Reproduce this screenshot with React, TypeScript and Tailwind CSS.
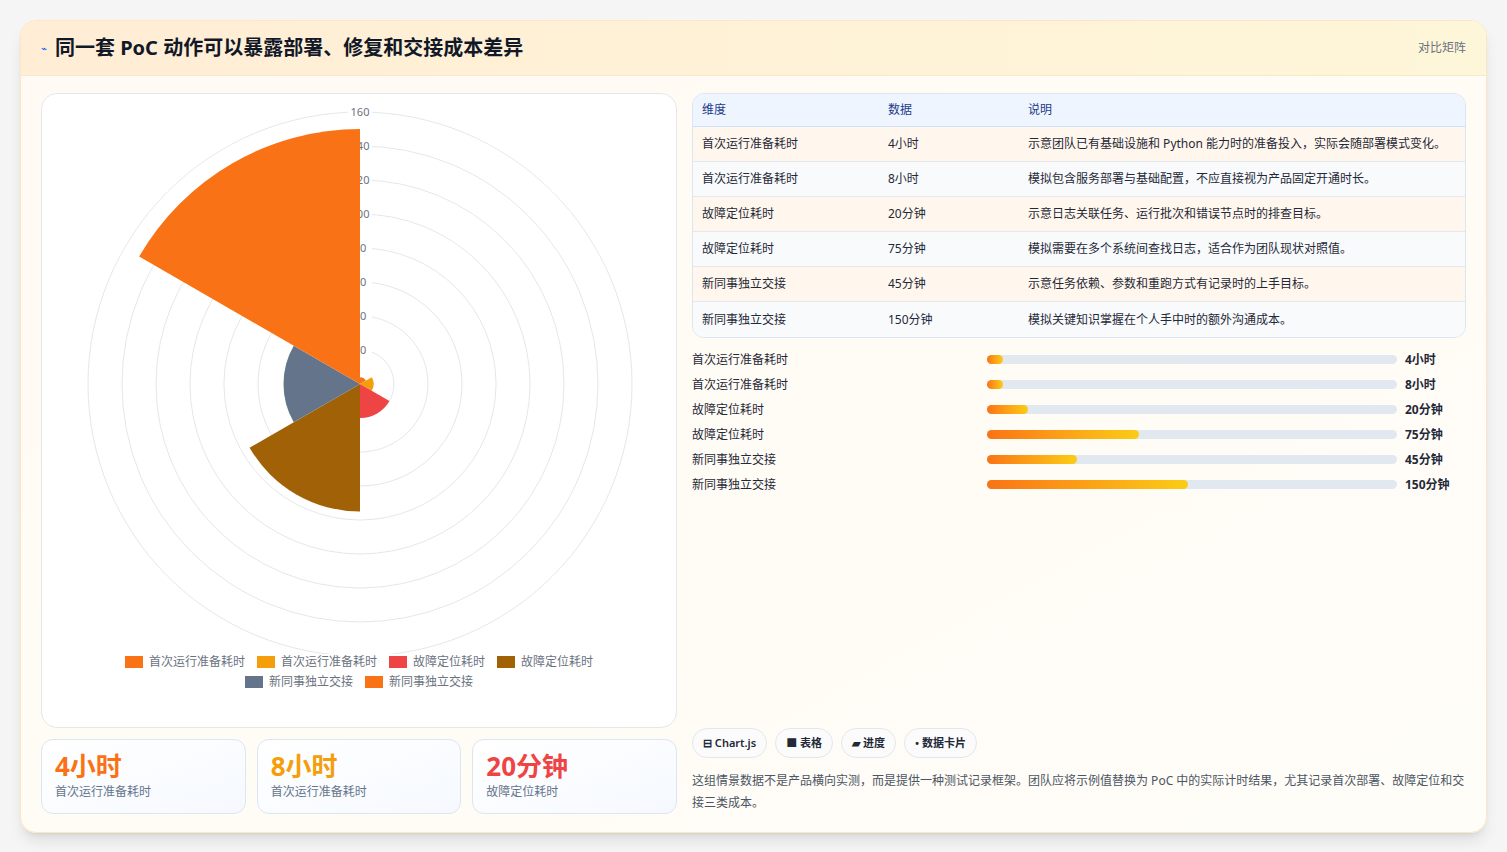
const rows = [
  { k: "首次运行准备耗时", v: "4小时", d: "示意团队已有基础设施和 Python 能力时的准备投入，实际会随部署模式变化。", n: 4, c: "#f97316", w: 4 },
  { k: "首次运行准备耗时", v: "8小时", d: "模拟包含服务部署与基础配置，不应直接视为产品固定开通时长。", n: 8, c: "#f59e0b", w: 4 },
  { k: "故障定位耗时", v: "20分钟", d: "示意日志关联任务、运行批次和错误节点时的排查目标。", n: 20, c: "#ef4444", w: 10 },
  { k: "故障定位耗时", v: "75分钟", d: "模拟需要在多个系统间查找日志，适合作为团队现状对照值。", n: 75, c: "#a16207", w: 37 },
  { k: "新同事独立交接", v: "45分钟", d: "示意任务依赖、参数和重跑方式有记录时的上手目标。", n: 45, c: "#64748b", w: 22 },
  { k: "新同事独立交接", v: "150分钟", d: "模拟关键知识掌握在个人手中时的额外沟通成本。", n: 150, c: "#f97316", w: 49 },
];

const font = { fontFamily: '"Noto Sans", "Noto Sans CJK SC", sans-serif' };

function Polar() {
  const cx = 318, cy = 290, k = 1.7;
  const pt = (a: number, r: number) => [cx + r * Math.cos((a * Math.PI) / 180), cy + r * Math.sin((a * Math.PI) / 180)];
  const seg = (i: number, v: number) => {
    const r = v * k, a0 = -90 + i * 60, a1 = a0 + 60;
    const [x0, y0] = pt(a0, r), [x1, y1] = pt(a1, r);
    return `M${cx} ${cy} L${x0} ${y0} A${r} ${r} 0 0 1 ${x1} ${y1} Z`;
  };
  return (
    <svg width="636" height="560" viewBox="0 0 636 560">
      {[1, 2, 3, 4, 5, 6, 7, 8].map((i) => (
        <circle key={i} cx={cx} cy={cy} r={i * 34} fill="none" stroke="#e5e7eb" strokeWidth="1" />
      ))}
      {[1, 2, 3, 4, 5, 6, 7, 8].map((i) => (
        <g key={i}>
          <rect x={cx - 12} y={cy - i * 34 - 7} width="24" height="13" fill="#fff" />
          <text x={cx} y={cy - i * 34 + 4} textAnchor="middle" fontSize="11" fill="#6b7280" style={font}>{i * 20}</text>
        </g>
      ))}
      {rows.map((r, i) => (
        <path key={i} d={seg(i, r.n)} fill={r.c} />
      ))}
    </svg>
  );
}

export default function App() {
  return (
    <div className="min-h-screen bg-[#f5f5f5] p-5" style={font}>
      <div className="rounded-2xl border border-[#fde6c4] bg-gradient-to-br from-[#fffaf3] to-[#fffdf8] shadow-lg overflow-hidden">
        <div className="flex h-[55px] items-center justify-between border-b border-[#fbe7cc] bg-gradient-to-r from-[#ffedd5] to-[#fef6d8] px-5">
          <div className="flex items-center gap-2">
            <span className="text-[10px] text-blue-600">⌁</span>
            <span className="text-xl font-bold text-[#111827]">同一套 PoC 动作可以暴露部署、修复和交接成本差异</span>
          </div>
          <span className="text-xs text-[#6b7280]">对比矩阵</span>
        </div>
        <div className="grid grid-cols-[636px_1fr] gap-[15px] px-5 pt-[17px] pb-[18px]">
          <div className="flex flex-col gap-[11px]">
            <div className="h-[635px] rounded-2xl border border-[#e5e7eb] bg-white">
              <Polar />
              <div className="flex flex-wrap justify-center gap-x-3 gap-y-1 px-6 text-xs text-[#6b7280]">
                {rows.map((r, i) => (
                  <span key={i} className="flex items-center gap-1.5">
                    <span className="inline-block h-3 w-[18px]" style={{ background: r.c }} />
                    {r.k}
                  </span>
                ))}
              </div>
            </div>
            <div className="grid grid-cols-3 gap-[11px]">
              {rows.slice(0, 3).map((r, i) => (
                <div key={i} className="h-[75px] rounded-xl border border-[#dbe6f3] bg-gradient-to-br from-white to-[#f5f9ff] px-[13px] pt-2">
                  <div className="text-[26px] font-bold leading-[36px]" style={{ color: r.c }}>{r.v}</div>
                  <div className="text-xs text-[#64748b]">{r.k}</div>
                </div>
              ))}
            </div>
          </div>
          <div className="flex flex-col">
            <div className="overflow-hidden rounded-xl border border-[#dbe6f3] text-xs text-[#1f2937]">
              <div className="grid h-[33px] grid-cols-[186px_140px_1fr] items-center border-b border-[#cfe0f5] bg-[#eef5ff] px-[9px] text-[#1e3a8a]">
                <span>维度</span><span>数据</span><span>说明</span>
              </div>
              {rows.map((r, i) => (
                <div key={i} className={`grid h-[35px] grid-cols-[186px_140px_1fr] items-center px-[9px] ${i < 5 ? "border-b border-[#e5e7eb]" : ""} ${i % 2 ? "bg-[#f8fafc]" : "bg-[#fff7ed]"}`}>
                  <span>{r.k}</span><span>{r.v}</span><span>{r.d}</span>
                </div>
              ))}
            </div>
            <div className="mt-[9px] flex flex-col">
              {rows.map((r, i) => (
                <div key={i} className="grid h-[25px] grid-cols-[295px_410px_1fr] items-center text-xs text-[#1f2937]">
                  <span>{r.k}</span>
                  <div className="h-[9px] rounded-full bg-[#e2e8f0]">
                    <div className="h-full rounded-full bg-gradient-to-r from-[#f97316] to-[#facc15]" style={{ width: `${r.w}%` }} />
                  </div>
                  <span className="pl-2 font-bold">{r.v}</span>
                </div>
              ))}
            </div>
            <div className="mt-auto flex gap-2 text-[11px] font-semibold text-[#1f2937]">
              {["⊟ Chart.js", "■ 表格", "▰ 进度", "• 数据卡片"].map((t) => (
                <span key={t} className="rounded-full border border-[#e5e7eb] bg-[#fbfbfb] px-2.5 py-1.5">{t}</span>
              ))}
            </div>
            <p className="mt-3 text-xs leading-[22px] text-[#4b5563]">
              这组情景数据不是产品横向实测，而是提供一种测试记录框架。团队应将示例值替换为 PoC 中的实际计时结果，尤其记录首次部署、故障定位和交接三类成本。
            </p>
          </div>
        </div>
      </div>
    </div>
  );
}
